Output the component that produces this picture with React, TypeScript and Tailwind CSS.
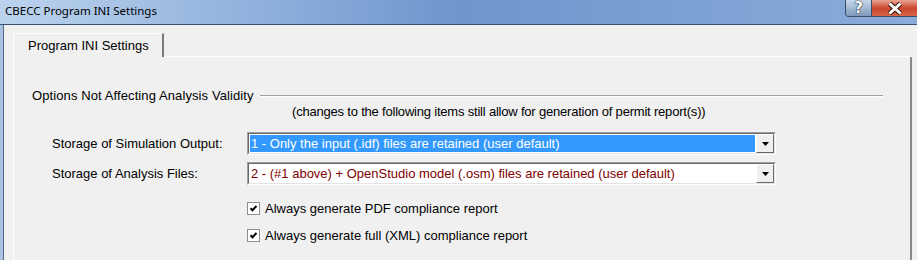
const Dropdown = ({ text, selected }: { text: string; selected?: boolean }) => {
    return (
        <div className="w-[529px] h-[23px] border border-t-[#a0a0a0] border-l-[#a0a0a0] border-b-white border-r-white">
            <div className="flex h-full border border-t-[#696969] border-l-[#696969] border-b-[#e3e3e3] border-r-[#e3e3e3] bg-white">
                <div className="flex-1 p-px">
                    <div className={`h-full flex items-center pl-[1px] whitespace-nowrap ${selected ? "bg-[#3399ff] text-white" : "text-[#800000]"}`}>
                        {text}
                    </div>
                </div>
                <div className="w-[18px] h-full flex items-center justify-center bg-[#f0f0f0] border border-t-white border-l-white border-b-[#696969] border-r-[#696969]">
                    <svg width="7" height="4" viewBox="0 0 7 4">
                        <path d="M0 0h7L3.5 4z" fill="#000" />
                    </svg>
                </div>
            </div>
        </div>
    );
};

const CheckRow = ({ label }: { label: string }) => {
    return (
        <div className="flex items-center h-[15px] pl-[233px]">
            <div className="w-[13px] h-[13px] flex items-center justify-center bg-white border border-[#8f8f8f]">
                <svg width="9" height="9" viewBox="0 0 9 9">
                    <path d="M1.5 4.2l2 2 4-4.2" stroke="#000" strokeWidth="2" fill="none" />
                </svg>
            </div>
            <span className="ml-[5px] whitespace-nowrap">{label}</span>
        </div>
    );
};

const TitleBar = () => {
    return (
        <div className="h-[25px] flex items-start justify-between border-b border-[#3b5272] bg-gradient-to-r from-[#bcd3ee] via-[#6e96cd] to-[#8aacd9]">
            <span className="pl-[5px] pt-[3px] text-[11.5px] text-black font-['Noto_Sans',sans-serif]">CBECC Program INI Settings</span>
            <div className="flex h-[17px] mr-[-12px] border border-t-0 border-[#3a4e6a] rounded-bl-[4px] rounded-br-[4px] overflow-hidden">
                <div className="w-[26px] flex items-center justify-center bg-gradient-to-b from-[#c9d8ea] to-[#7f9abc] border-r border-[#3a4e6a]">
                    <span className="text-[15px] font-bold text-white leading-none [text-shadow:0_0_1px_#1c2b40,0_0_1px_#1c2b40,0_0_1px_#1c2b40] font-['DejaVu_Sans',sans-serif]">?</span>
                </div>
                <div className="w-[56px] flex items-center justify-start pl-[15px] bg-gradient-to-b from-[#e8a594] via-[#c9452d] to-[#d86446]">
                    <svg width="16" height="13" viewBox="0 0 16 13">
                        <path d="M2.5 1.5l11 10M13.5 1.5l-11 10" stroke="#3a1a14" strokeWidth="5" />
                        <path d="M2.5 1.5l11 10M13.5 1.5l-11 10" stroke="#ffffff" strokeWidth="3" />
                    </svg>
                </div>
            </div>
        </div>
    );
};

export default function App() {
    return (
        <div className="w-[917px] h-[260px] overflow-hidden bg-[#f0f0f0] flex flex-col font-['Liberation_Sans',Arial,sans-serif] text-[13px] leading-[15px] text-black">
            <TitleBar />
            <div className="flex-1 flex">
                <div className="w-[3px] bg-[#a9c2e2]" />
                <div className="w-px bg-[#54698a]" />
                <div className="flex-1 flex flex-col pt-[8px] pl-[9px] pr-[5px]">
                    <div className="flex h-[24px]">
                        <div className="w-[151px] h-[24px] flex items-center pl-[14px] border-t border-l border-white border-r-2 border-r-[#7a7a7a]">
                            Program INI Settings
                        </div>
                        <div className="flex-1 border-b border-white" />
                    </div>
                    <div className="flex-1 border-l border-white border-r-2 border-r-[#8a8a8a]">
                        <div className="flex items-center h-[15px] mt-[31px] pl-[18px]">
                            <span className="whitespace-nowrap tracking-[0.1px]">Options Not Affecting Analysis Validity</span>
                            <div className="flex-1 ml-[6px] mr-[27px] h-[2px] border-t border-[#a0a0a0] border-b border-b-white" />
                        </div>
                        <div className="h-[15px] mt-px pl-[278px] whitespace-nowrap tracking-[-0.2px]">
                            (changes to the following items still allow for generation of permit report(s))
                        </div>
                        <div className="flex items-center mt-[13px] pl-[38px]">
                            <span className="w-[195px] whitespace-nowrap">Storage of Simulation Output:</span>
                            <Dropdown text="1 - Only the input (.idf) files are retained (user default)" selected />
                        </div>
                        <div className="flex items-center mt-[7px] pl-[38px]">
                            <span className="w-[195px] whitespace-nowrap">Storage of Analysis Files:</span>
                            <Dropdown text="2 - (#1 above) + OpenStudio model (.osm) files are retained (user default)" />
                        </div>
                        <div className="mt-[16px]">
                            <CheckRow label="Always generate PDF compliance report" />
                        </div>
                        <div className="mt-[12px]">
                            <CheckRow label="Always generate full (XML) compliance report" />
                        </div>
                    </div>
                </div>
            </div>
        </div>
    );
}
